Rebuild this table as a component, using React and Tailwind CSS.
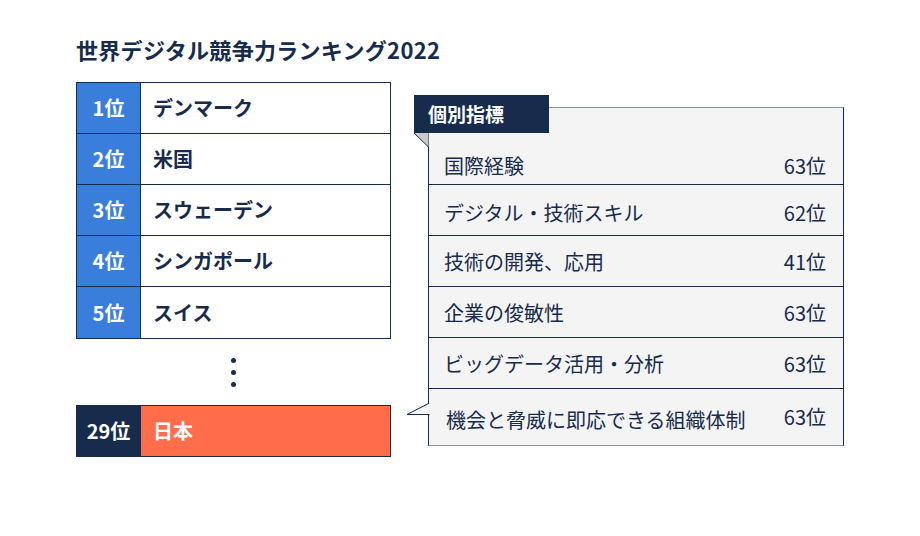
const topRanks = [
  { rank: "1位", name: "デンマーク" },
  { rank: "2位", name: "米国" },
  { rank: "3位", name: "スウェーデン" },
  { rank: "4位", name: "シンガポール" },
  { rank: "5位", name: "スイス" },
];

const indicators = [
  { label: "技術の開発、応用", rank: "41位" },
  { label: "企業の俊敏性", rank: "63位" },
  { label: "ビッグデータ活用・分析", rank: "63位" },
];

function TabFold() {
  return (
    <svg className="absolute left-0 top-[38px]" width="15" height="15" viewBox="0 0 15 15">
      <polygon points="0,0 14.5,0 14.5,14" fill="#c9cacd" />
      <line x1="0" y1="0" x2="14.5" y2="14" stroke="#172b4d" strokeWidth="1" />
    </svg>
  );
}

function BubbleTail() {
  return (
    <svg className="absolute left-[-23px] top-[14px]" width="25" height="14" viewBox="0 0 25 14">
      <polygon points="23.5,0 1,11.5 23.5,11.5 25,11.5 25,0" fill="#f4f4f4" />
      <polyline points="23.5,0 1,11.5 23.5,11.5" fill="none" stroke="#172b4d" strokeWidth="1" />
    </svg>
  );
}

export default function App() {
  return (
    <div
      className="w-[920px] h-[536px] bg-white text-[#172b4d] pt-[34px] pl-[76px]"
      style={{ fontFamily: '"Noto Sans CJK JP", "Noto Sans", sans-serif' }}
    >
      <h1 className="h-[30px] text-[22px] leading-[30px] font-bold tracking-[0.3px]">
        世界デジタル競争力ランキング2022
      </h1>

      <div className="flex gap-[23px] mt-[18px]">
        {/* Ranking table */}
        <div className="w-[315px]">
          <div className="border border-[#172b4d]">
            {topRanks.map((r, i) => (
              <div
                key={r.rank}
                className={`flex h-[51px] ${i < topRanks.length - 1 ? "border-b border-[#172b4d]" : "h-[50px]"}`}
              >
                <div className="w-[64px] bg-[#3a7edc] border-r border-[#172b4d] flex items-center justify-center text-white text-[20px] font-bold">
                  {r.rank}
                </div>
                <div className="flex items-center pl-[12px] text-[20px] font-bold">{r.name}</div>
              </div>
            ))}
          </div>

          <div className="h-[66px] flex flex-col items-center justify-center gap-[7px]">
            <span className="w-[5px] h-[5px] rounded-full bg-[#172b4d]" />
            <span className="w-[5px] h-[5px] rounded-full bg-[#172b4d]" />
            <span className="w-[5px] h-[5px] rounded-full bg-[#172b4d]" />
          </div>

          <div className="flex h-[52px] border border-[#172b4d]">
            <div className="w-[64px] bg-[#172b4d] border-r border-[#172b4d] flex items-center justify-center text-white text-[20px] font-bold">
              29位
            </div>
            <div className="flex-1 bg-[#ff6d4b] flex items-center pl-[12px] text-white text-[20px] font-bold">
              日本
            </div>
          </div>
        </div>

        {/* Individual indicators */}
        <div className="relative w-[430px] mt-[13px] pl-[14px]">
          <div className="absolute left-0 top-0 w-[135px] h-[38px] bg-[#172b4d] text-white text-[19px] font-bold flex items-center pl-[14px]">
            個別指標
          </div>
          <TabFold />

          <div className="mt-[12px] w-[416px] bg-[#f4f4f4] border-x border-x-[#172b4d] border-y border-y-[#8a93a6] text-[20px]">
            <div className="h-[77px] flex items-center justify-between pt-[40px] pl-[15px] pr-[17px] border-b border-[#172b4d]">
              <span>国際経験</span>
              <span>63位</span>
            </div>
            <div className="h-[51px] flex items-center justify-between pt-[5px] pl-[15px] pr-[17px] border-b border-[#172b4d]">
              <span>デジタル・技術スキル</span>
              <span>62位</span>
            </div>
            {indicators.map((it) => (
              <div
                key={it.label}
                className="h-[51px] flex items-center justify-between pt-[2px] pl-[15px] pr-[17px] border-b border-[#172b4d]"
              >
                <span>{it.label}</span>
                <span>{it.rank}</span>
              </div>
            ))}
            <div className="relative h-[56px] flex items-center justify-between pt-[2px] pl-[17px] pr-[17px]">
              <BubbleTail />
              <span className="pt-[3px]">機会と脅威に即応できる組織体制</span>
              <span className="pb-[3px]">63位</span>
            </div>
          </div>
        </div>
      </div>
    </div>
  );
}
